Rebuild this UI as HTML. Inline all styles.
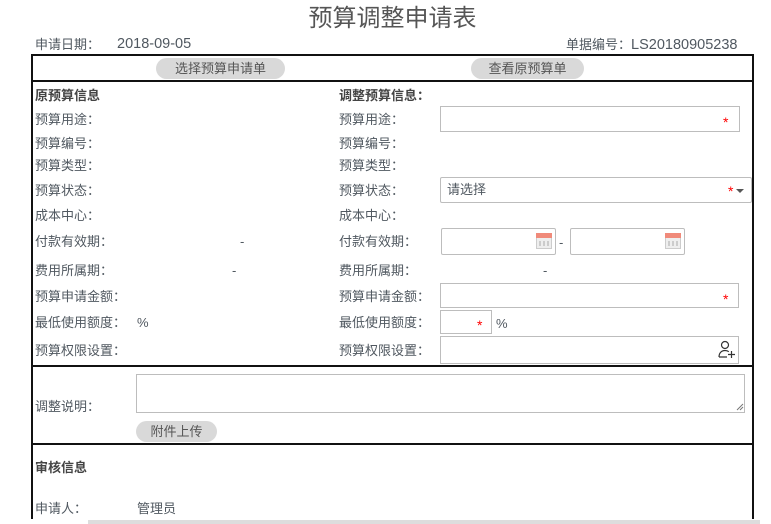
<!DOCTYPE html>
<html><head><meta charset="utf-8"><style>
*{margin:0;padding:0;box-sizing:border-box}
body{width:771px;height:524px;overflow:hidden;background:#fff;position:relative;font-family:"Liberation Sans","Noto Sans CJK SC",sans-serif;font-size:13px;color:#505860}
.a{position:absolute;white-space:nowrap;line-height:18px}
.b{font-weight:bold;color:#444}
.box{position:absolute;border:1px solid #bdbdbd;background:#fff}
.btn{position:absolute;background:#d9d9d9;border-radius:11px;text-align:center;line-height:21px;font-size:13px;color:#555}
.st{position:absolute;color:#f00;font-size:14px;line-height:14px}
.hl{position:absolute;height:2px;background:#111}
.vl{position:absolute;width:2px;background:#111}
.cal{position:absolute;width:16px;height:15px;border:1px solid #ccc;background:#eee}
.cal:before{content:"";position:absolute;left:-1px;top:-2px;width:16px;height:5px;background:#f08a7a}
.cal:after{content:"";position:absolute;left:2px;top:6px;width:10px;height:5px;background:repeating-linear-gradient(90deg,#ccc 0 2px,#eee 2px 4px)}
</style></head><body>
<div class="a" style="left:0;width:785px;text-align:center;top:5px;font-size:24px;line-height:28px;color:#555">预算调整申请表</div>
<div class="a" style="left:35px;top:36px">申请日期：</div>
<div class="a" style="left:117px;top:35px;font-size:14.5px">2018-09-05</div>
<div class="a" style="left:566px;top:36px">单据编号：<span style="font-size:14.5px">LS20180905238</span></div>

<div class="hl" style="left:32px;top:54px;width:722px"></div>
<div class="hl" style="left:32px;top:80px;width:722px"></div>
<div class="hl" style="left:32px;top:365px;width:722px"></div>
<div class="hl" style="left:32px;top:443px;width:722px"></div>
<div class="vl" style="left:31px;top:54px;height:465px"></div>
<div class="vl" style="left:752px;top:54px;height:465px"></div>

<div class="btn" style="left:156px;top:58px;width:129px">选择预算申请单</div>
<div class="btn" style="left:471px;top:58px;width:113px">查看原预算单</div>

<div class="a b" style="left:35px;top:87px">原预算信息</div>
<div class="a" style="left:35px;top:111px">预算用途：</div>
<div class="a" style="left:35px;top:135px">预算编号：</div>
<div class="a" style="left:35px;top:157px">预算类型：</div>
<div class="a" style="left:35px;top:182px">预算状态：</div>
<div class="a" style="left:35px;top:207px">成本中心：</div>
<div class="a" style="left:35px;top:233px">付款有效期：</div>
<div class="a" style="left:240px;top:233px">-</div>
<div class="a" style="left:35px;top:262px">费用所属期：</div>
<div class="a" style="left:232px;top:262px">-</div>
<div class="a" style="left:35px;top:288px">预算申请金额：</div>
<div class="a" style="left:35px;top:314px">最低使用额度：</div>
<div class="a" style="left:137px;top:314px">%</div>
<div class="a" style="left:35px;top:342px">预算权限设置：</div>

<div class="a b" style="left:339px;top:87px">调整预算信息：</div>
<div class="a" style="left:339px;top:111px">预算用途：</div>
<div class="a" style="left:339px;top:135px">预算编号：</div>
<div class="a" style="left:339px;top:157px">预算类型：</div>
<div class="a" style="left:339px;top:182px">预算状态：</div>
<div class="a" style="left:339px;top:207px">成本中心：</div>
<div class="a" style="left:339px;top:233px">付款有效期：</div>
<div class="a" style="left:339px;top:262px">费用所属期：</div>
<div class="a" style="left:543px;top:262px">-</div>
<div class="a" style="left:339px;top:288px">预算申请金额：</div>
<div class="a" style="left:339px;top:314px">最低使用额度：</div>
<div class="a" style="left:339px;top:342px">预算权限设置：</div>

<div class="box" style="left:440px;top:106px;width:300px;height:26px"></div>
<div class="st" style="left:723px;top:115px">*</div>
<div class="box" style="left:440px;top:177px;width:312px;height:26px;border-radius:2px"></div>
<div class="a" style="left:447px;top:181px">请选择</div>
<div class="st" style="left:728px;top:184px">*</div>
<div style="position:absolute;left:736px;top:189px;border-left:4px solid transparent;border-right:4px solid transparent;border-top:4px solid #555"></div>
<div class="box" style="left:441px;top:228px;width:115px;height:27px;border-radius:2px"></div>
<div class="cal" style="left:536px;top:234px"></div>
<div class="a" style="left:559px;top:234px">-</div>
<div class="box" style="left:570px;top:228px;width:115px;height:27px;border-radius:2px"></div>
<div class="cal" style="left:665px;top:234px"></div>
<div class="box" style="left:440px;top:283px;width:299px;height:25px"></div>
<div class="st" style="left:723px;top:292px">*</div>
<div class="box" style="left:440px;top:310px;width:52px;height:24px"></div>
<div class="st" style="left:477px;top:318px">*</div>
<div class="a" style="left:496px;top:315px">%</div>
<div class="box" style="left:440px;top:336px;width:299px;height:28px"></div>
<svg style="position:absolute;left:718px;top:340px" width="18" height="19" viewBox="0 0 18 19" fill="none" stroke="#333" stroke-width="1.2"><circle cx="7" cy="5" r="3.5"/><path d="M1 17c0-4 2.5-6.5 6-6.5 1.5 0 2.8.4 3.8 1.2M1 17h8"/><path d="M13.5 11v7M10 14.5h7"/></svg>

<div class="a" style="left:35px;top:398px">调整说明：</div>
<div class="box" style="left:136px;top:374px;width:609px;height:39px"></div>
<svg style="position:absolute;left:735px;top:402px" width="9" height="9"><path d="M8 2L2 8M8 5L5 8" stroke="#777"/></svg>
<div class="btn" style="left:136px;top:421px;width:81px">附件上传</div>

<div class="a b" style="left:35px;top:459px">审核信息</div>
<div class="a" style="left:35px;top:500px">申请人：</div>
<div class="a" style="left:137px;top:500px">管理员</div>
<div style="position:absolute;left:88px;top:520px;width:672px;height:4px;background:#ddd"></div>
</body></html>
